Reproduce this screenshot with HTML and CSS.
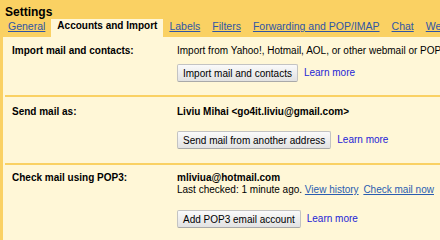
FILE: index.html
```html
<!DOCTYPE html>
<html>
<head>
<meta charset="utf-8">
<link rel="stylesheet" href="styles.css">
</head>
<body>
<div class="page">
  <h1 class="title">Settings</h1>
  <nav class="tabs">
    <a class="tab" href="#">General</a>
    <span class="tab active">Accounts and Import</span>
    <a class="tab" href="#">Labels</a>
    <a class="tab" href="#">Filters</a>
    <a class="tab" href="#">Forwarding and POP/IMAP</a>
    <a class="tab" href="#">Chat</a>
    <a class="tab" href="#">Web Clips</a>
  </nav>
  <div class="panel">
    <div class="row row-import">
      <div class="label">Import mail and contacts:</div>
      <div class="value">
        <div class="line">Import from Yahoo!, Hotmail, AOL, or other webmail or POP3 accounts.</div>
        <div class="actions">
          <button class="btn">Import mail and contacts</button>
          <a class="learn" href="#">Learn more</a>
        </div>
      </div>
    </div>
    <div class="row row-send">
      <div class="label">Send mail as:</div>
      <div class="value">
        <div class="line strong">Liviu Mihai &lt;go4it.liviu@gmail.com&gt;</div>
        <div class="actions">
          <button class="btn">Send mail from another address</button>
          <a class="learn" href="#">Learn more</a>
        </div>
      </div>
    </div>
    <div class="row row-pop">
      <div class="label">Check mail using POP3:</div>
      <div class="value">
        <div class="line strong">mliviua@hotmail.com</div>
        <div class="line">Last checked: 1 minute ago. <a class="link" href="#">View history</a> <a class="link gap" href="#">Check mail now</a></div>
        <div class="actions">
          <button class="btn">Add POP3 email account</button>
          <a class="learn" href="#">Learn more</a>
        </div>
      </div>
    </div>
  </div>
</div>
</body>
</html>
```

FILE: styles.css
```css
html, body {
  margin: 0;
  padding: 0;
}
body {
  background: #fad163;
  font-family: "Liberation Sans", Arial, sans-serif;
  color: #000;
  width: 440px;
  height: 240px;
  overflow: hidden;
}
.page {
  display: flex;
  flex-direction: column;
  height: 240px;
}
.title {
  margin: 5px 0 0 5px;
  font-size: 12px;
  line-height: 14px;
  font-weight: bold;
  color: #000;
}
.tabs {
  display: flex;
  white-space: nowrap;
  overflow: hidden;
  padding-left: 2px;
  height: 18px;
}
.tab {
  padding: 0 6px 4px;
  font-size: 10.5px;
  line-height: 14px;
  color: #2f56a6;
  text-decoration: underline;
}
.tab.active {
  background: #fff7d7;
  color: #000;
  font-weight: bold;
  font-size: 10px;
  text-decoration: none;
  padding-left: 6px;
  padding-right: 6px;
}
.panel {
  flex: 1;
  margin-left: 3px;
  background: #fff7d7;
}
.row {
  display: flex;
  margin-left: 2px;
  font-size: 10px;
  line-height: 13px;
}
.row + .row {
  border-top: 2px solid #fad163;
}
.label {
  width: 165px;
  padding-left: 7px;
  flex: none;
  font-weight: bold;
  white-space: nowrap;
}
.value {
  flex: 1;
  white-space: nowrap;
  overflow: hidden;
}
.strong {
  font-weight: bold;
}
.actions {
  display: flex;
  align-items: center;
  gap: 6px;
}
.btn {
  height: 18px;
  padding: 0 5px;
  font-family: "Liberation Sans", Arial, sans-serif;
  font-size: 10px;
  color: #000;
  border: 1px solid #c3c3c3;
  border-bottom-color: #a9a9a9;
  border-radius: 2px;
  background: linear-gradient(#fafafa, #e2e2e2);
}
.learn {
  color: #2424d6;
  text-decoration: none;
  margin-top: -1px;
}
.link {
  color: #2a5db0;
  text-decoration: underline;
}
.link.gap {
  margin-left: 2px;
}
.row-import {
  padding: 7px 0 13px;
}
.row-import .actions {
  margin-top: 7px;
}
.row-send {
  padding: 8px 0 14px;
}
.row-send .actions {
  margin-top: 13px;
}
.row-pop {
  padding-top: 7px;
}
.row-pop .line {
  line-height: 12px;
}
.row-pop .label {
  line-height: 12px;
}
.row-pop .actions {
  margin-top: 14px;
}
```
